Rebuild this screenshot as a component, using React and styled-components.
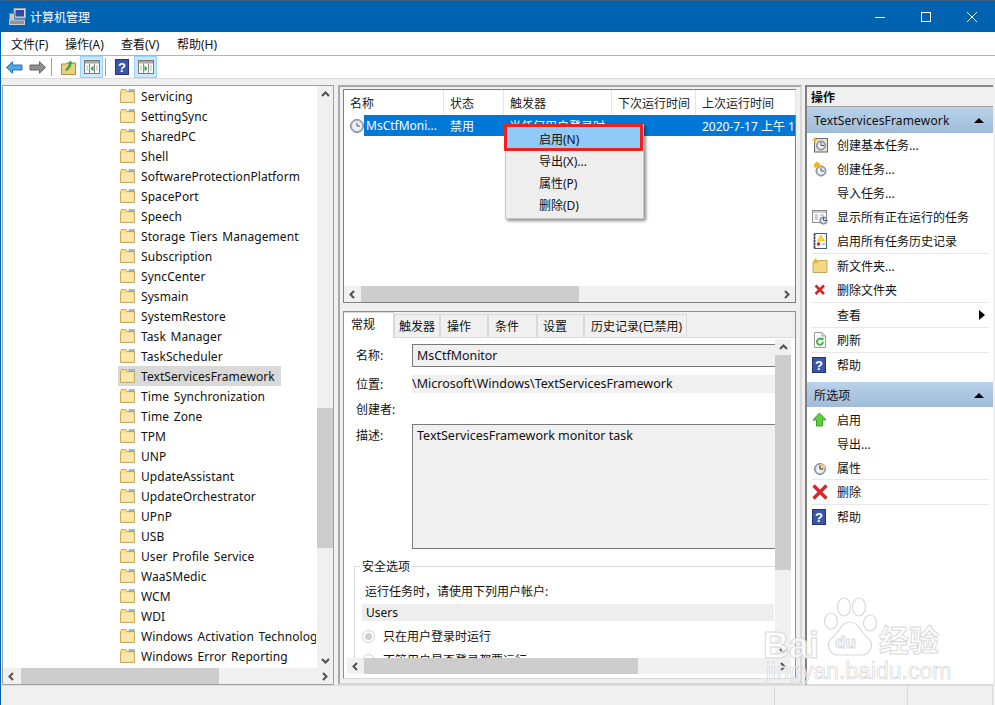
import React from 'react';
import styled, { createGlobalStyle } from 'styled-components';

const Global = createGlobalStyle`
  html, body { margin: 0; padding: 0; background: #f0f0f0; }
  * { box-sizing: border-box; }
  body {
    font-family: "Noto Sans", "Noto Sans CJK SC", sans-serif;
    font-size: 12px;
    color: #111;
  }
`;

const Page = styled.div`
  position: relative;
  width: 995px;
  height: 705px;
  overflow: hidden;
  display: flex;
  flex-direction: column;
  background: #f0f0f0;
  border-left: 1px solid #0063b1;
`;

const TitleBar = styled.div`
  height: 32px;
  flex: none;
  margin-left: -1px;
  display: flex;
  align-items: center;
  padding-left: 9px;
  gap: 4px;
  background: #0063b1;
  border-top: 1px solid #3f5f80;
  color: #fff;
`;

const WindowButtons = styled.div`
  margin-left: auto;
  display: flex;
  align-items: center;
`;

const WindowButton = styled.div`
  width: 46px;
  height: 30px;
  display: flex;
  align-items: center;
  justify-content: center;
`;

const MenuBar = styled.div`
  height: 24px;
  flex: none;
  display: flex;
  padding-left: 10px;
  align-items: center;
  background: #fff;
  border-bottom: 1px solid #b4b4b4;
`;

const MenuItem = styled.span`
  width: ${(p) => p.$width}px;
`;

const ToolBar = styled.div`
  height: 23px;
  flex: none;
  display: flex;
  align-items: center;
  padding-left: 2px;
  background: #fff;
  border-bottom: 1px solid #dcdcdc;
`;

const ToolButton = styled.div`
  width: ${(p) => p.$width || 23}px;
  height: 22px;
  display: flex;
  align-items: center;
  justify-content: center;
  border: 1px solid ${(p) => (p.$on ? '#99d1ff' : 'transparent')};
  background: ${(p) => (p.$on ? '#cce8ff' : 'transparent')};
`;

const ToolSep = styled.div`
  width: 1px;
  height: 18px;
  margin: 0 ${(p) => p.$after}px 0 2px;
  background: #a0a0a0;
`;

const Main = styled.div`
  flex: 1;
  min-height: 0;
  display: flex;
  padding: 6px 1px 0 1px;
`;

const TreePane = styled.div`
  width: 332px;
  flex: none;
  display: flex;
  flex-direction: column;
  border: 1px solid #a0a0a0;
  background: #fff;
`;

const TreeTop = styled.div`
  flex: 1;
  min-height: 0;
  display: flex;
`;

const TreeList = styled.div`
  flex: 1;
  min-width: 0;
  overflow: hidden;
  padding: 0 0 0 115px;
  letter-spacing: 0.07px;
  word-spacing: 1.5px;
`;

const TreeRow = styled.div`
  height: 20px;
  width: ${(p) => (p.$on ? '163px' : '198px')};
  display: flex;
  align-items: center;
  gap: 6px;
  padding-left: 2px;
  white-space: nowrap;
  overflow: ${(p) => (p.$on ? 'visible' : 'hidden')};
  background: ${(p) => (p.$on ? '#d9d9d9' : 'transparent')};
  svg { flex: none; }
`;

const ScrollTrack = styled.div`
  flex: none;
  display: flex;
  flex-direction: ${(p) => (p.$vertical ? 'column' : 'row')};
  align-items: stretch;
  background: #f0f0f0;
  ${(p) => (p.$vertical ? 'width: 16px;' : 'height: 16px;')}
`;

const ScrollEnd = styled.div`
  flex: none;
  width: ${(p) => (p.$vertical ? '16px' : '17px')};
  height: ${(p) => (p.$vertical ? '16px' : 'auto')};
  display: flex;
  align-items: center;
  justify-content: center;
`;

const ScrollRail = styled.div`
  flex: 1;
  min-width: 0;
  min-height: 0;
`;

const ScrollThumb = styled.div`
  background: #cdcdcd;
  ${(p) =>
    p.$vertical
      ? `margin-top:${p.$start}px; height:${p.$size}px;`
      : `margin-left:${p.$start}px; width:${p.$size}px; height:100%;`}
`;

const CenterColumn = styled.div`
  width: 464px;
  flex: none;
  margin-left: 4px;
  display: flex;
  flex-direction: column;
  gap: 8px;
  padding: 2px 4px 4px 3px;
  border: 2px solid #a8a8a8;
  border-bottom-color: #d8d8d8;
  border-right-color: #d8d8d8;
`;

const TaskPane = styled.div`
  height: 214px;
  flex: none;
  display: flex;
  flex-direction: column;
  background: #fff;
  border: 1px solid #7f7f7f;
`;

const HeaderRow = styled.div`
  height: 25px;
  flex: none;
  display: flex;
`;

const HeaderCell = styled.div`
  width: ${(p) => p.$width}px;
  flex: none;
  padding-left: 6px;
  display: flex;
  align-items: center;
  border-right: 1px solid #e5e5e5;
  color: #222;
`;

const TaskRow = styled.div`
  height: 21px;
  flex: none;
  display: flex;
  align-items: center;
  padding-left: 5px;
`;

const TaskCells = styled.div`
  flex: 1;
  height: 21px;
  margin-left: -1px;
  display: flex;
  align-items: center;
  background: #0078d7;
  color: #fff;
  white-space: nowrap;
  overflow: hidden;
`;

const TaskCell = styled.span`
  width: ${(p) => p.$width}px;
  flex: none;
  padding-left: ${(p) => p.$pad}px;
  overflow: hidden;
`;

const TaskSpace = styled.div`
  flex: 1;
`;

const DetailPane = styled.div`
  flex: 1;
  min-height: 0;
  display: flex;
  flex-direction: column;
  background: #fff;
  border: 1px solid #909090;
  border-bottom-color: #d8d8d8;
`;

const TabStrip = styled.div`
  height: 26px;
  flex: none;
  display: flex;
  align-items: flex-end;
  background: #f0f0f0;
  border-bottom: 1px solid #d9d9d9;
`;

const Tab = styled.div`
  width: ${(p) => p.$width}px;
  height: ${(p) => (p.$on ? 26 : 23)}px;
  margin-bottom: ${(p) => (p.$on ? -1 : 0)}px;
  flex: none;
  padding: 0 0 ${(p) => (p.$on ? 3 : 1)}px ${(p) => p.$pad}px;
  display: flex;
  align-items: center;
  background: ${(p) => (p.$on ? '#fff' : '#f0f0f0')};
  border: 1px solid #d9d9d9;
  border-left-width: ${(p) => (p.$on ? 0 : 1)}px;
  border-bottom-width: 0;
  z-index: 1;
`;

const TabBody = styled.div`
  flex: 1;
  min-height: 0;
  display: flex;
  flex-direction: column;
  padding: 1px 4px 4px 3px;
`;

const FormArea = styled.div`
  flex: 1;
  min-height: 0;
  display: flex;
`;

const Form = styled.div`
  flex: 1;
  min-width: 0;
  overflow: hidden;
  padding: 5px 0 0 9px;
`;

const FormRow = styled.div`
  display: flex;
  height: ${(p) => p.$height}px;
  margin-top: ${(p) => p.$top || 0}px;
`;

const FormLabel = styled.div`
  width: 56px;
  flex: none;
  padding-top: ${(p) => p.$pad || 0}px;
  line-height: 18px;
`;

const ReadBox = styled.div`
  flex: 1;
  min-width: 0;
  padding: ${(p) => (p.$pad ? '0 4px' : '0')};
  font-size: ${(p) => p.$size || 12}px;
  line-height: ${(p) => p.$line || 18}px;
  background: #f0f0f0;
  border: ${(p) => (p.$framed ? '1px solid #7a7a7a' : 'none')};
  border-right: none;
  white-space: nowrap;
`;

const Group = styled.div`
  position: relative;
  margin: 17px 0 0 -2px;
  padding: 16px 0 0 7px;
  border-top: 1px solid #dcdcdc;
  border-left: 1px solid #dcdcdc;
`;

const Legend = styled.span`
  position: absolute;
  top: -9px;
  left: 5px;
  padding: 0 2px;
  line-height: 18px;
  background: #fff;
`;

const GroupText = styled.div`
  line-height: 18px;
  padding-left: 3px;
`;

const UserBox = styled.div`
  height: 17px;
  margin: 3px 1px 0 0;
  padding-left: 4px;
  line-height: 17px;
  background: #eeeeee;
`;

const RadioRow = styled.div`
  display: flex;
  align-items: center;
  gap: 8px;
  height: 18px;
  margin-top: 6px;
`;

const Radio = styled.span`
  position: relative;
  width: 13px;
  height: 13px;
  flex: none;
  border: 1px solid #cfcfcf;
  border-radius: 50%;
  background: #fff;
  ${(p) =>
    p.$on &&
    `&::after {
      content: '';
      position: absolute;
      inset: 2px;
      border-radius: 50%;
      background: #cfcfcf;
    }`}
`;

const ActionPane = styled.div`
  width: 188px;
  flex: none;
  margin-left: 3px;
  background: #fff;
  border-left: 2px solid #7f7f7f;
  border-top: 2px solid #8a8a8a;
  border-bottom: 1px solid #d8d8d8;
`;

const ActionTitle = styled.div`
  height: 20px;
  padding-left: 4px;
  display: flex;
  align-items: center;
  font-weight: 700;
  background: #f0f0f0;
  border-bottom: 1px solid #a0a0a0;
`;

const ActionBand = styled.div`
  height: ${(p) => p.$height}px;
  margin-top: ${(p) => p.$top || 0}px;
  padding: 1px 9px 0 7px;
  display: flex;
  align-items: center;
  justify-content: space-between;
  letter-spacing: 0.15px;
  background: linear-gradient(#bad3ec, #9fbbd8);
`;

const Caret = styled.span`
  width: 0;
  height: 0;
  border-left: 5px solid transparent;
  border-right: 5px solid transparent;
  border-bottom: 5px solid #000;
`;

const ActionList = styled.div`
  display: flex;
  flex-direction: column;
  padding: ${(p) => p.$top || 0}px 5px 0;
`;

const ActionRow = styled.div`
  position: relative;
  height: ${(p) => p.$height || 24}px;
  display: flex;
  align-items: center;
  border-bottom: 1px solid ${(p) => (p.$line ? '#e8e8e8' : 'transparent')};
`;

const ActionIcon = styled.span`
  width: 25px;
  height: 18px;
  flex: none;
  display: flex;
  align-items: center;
  justify-content: flex-start;
`;

const RowArrow = styled.span`
  margin-left: auto;
  margin-right: 3px;
  width: 0;
  height: 0;
  border-top: 5px solid transparent;
  border-bottom: 5px solid transparent;
  border-left: 6px solid #000;
`;

const StatusBar = styled.div`
  height: 20px;
  flex: none;
  display: flex;
  background: #f0f0f0;
  border-top: 1px solid #dedede;
`;

const StatusCell = styled.div`
  width: ${(p) => p.$width}px;
  flex: none;
  border-right: 1px solid #d9d9d9;
`;

const ContextMenu = styled.div`
  position: absolute;
  left: 504px;
  top: 124px;
  width: 139px;
  height: 95px;
  padding: 2px 1px;
  background: #eeeeee;
  border: 1px solid #c8c8c8;
  box-shadow: 2px 2px 3px rgba(0, 0, 0, 0.45);
`;

const ContextItem = styled.div`
  height: ${(p) => (p.$on ? 23 : 22)}px;
  padding-left: 32px;
  display: flex;
  align-items: center;
  background: ${(p) => (p.$on ? '#91c9f7' : 'transparent')};
`;

const RedFrame = styled.div`
  position: absolute;
  left: 503px;
  top: 124px;
  width: 139px;
  height: 27px;
  border: 3px solid #f0201c;
  border-radius: 1px;
`;

const Watermark = styled.div`
  position: absolute;
  left: 762px;
  top: 596px;
  width: 182px;
  height: 90px;
  pointer-events: none;
`;

const MarkBrand = styled.span`
  position: absolute;
  left: ${(p) => p.$left}px;
  top: ${(p) => p.$top}px;
  font-family: "Liberation Sans", "Noto Sans CJK SC", sans-serif;
  font-size: ${(p) => p.$size}px;
  font-weight: 700;
  line-height: 1;
  color: rgba(255, 255, 255, 0.75);
  -webkit-text-stroke: 1px #d9d9d9;
  white-space: nowrap;
`;

const MarkLink = styled.span`
  position: absolute;
  left: 3px;
  top: 64px;
  font-family: "Liberation Sans", sans-serif;
  font-size: 23px;
  line-height: 1;
  color: rgba(255, 255, 255, 0.7);
  -webkit-text-stroke: 0.7px #d6d6d6;
  white-space: nowrap;
`;

const MarkPaw = styled.svg`
  position: absolute;
  left: 60px;
  top: 1px;
`;

/* ---- drawings ---- */

const Chevron = ({ dir }) => {
  const d = {
    up: 'M1 6 L4.5 2.5 L8 6',
    down: 'M1 3 L4.5 6.5 L8 3',
    left: 'M6 1 L2.5 4.5 L6 8',
    right: 'M3 1 L6.5 4.5 L3 8',
  }[dir];
  return (
    <svg width="9" height="9" viewBox="0 0 9 9">
      <path d={d} fill="none" stroke="#505050" strokeWidth="2" />
    </svg>
  );
};

const Folder = () => (
  <svg width="15" height="14" viewBox="0 0 15 14">
    <path d="M0.5 2.5 V13.5 H14.5 V2.5 H7 L6 0.5 H1.5 Z" fill="#f9dc8c" stroke="#c9a95e" />
    <path d="M1.5 4 H13.5 V12.5 H1.5 Z" fill="#fbe7ab" />
    <path d="M9 0.5 H14.5 V2.5 H9 Z" fill="#8fb8dc" stroke="#9a9a7a" strokeWidth="0.5" />
  </svg>
);

const ClockGlyph = ({ cx = 8, cy = 8, r = 6.5 }) => (
  <g>
    <circle cx={cx} cy={cy} r={r} fill="#a9b6c2" stroke="#7c8792" />
    <circle cx={cx} cy={cy} r={r - 1.6} fill="#eef1f3" />
    <path d={`M${cx} ${cy - 3.2} V${cy} H${cx + 3}`} fill="none" stroke="#4a5560" strokeWidth="1" />
  </g>
);

const ClockIcon = () => (
  <svg width="16" height="16" viewBox="0 0 16 16">
    <ClockGlyph />
  </svg>
);

const NewTaskIcon = () => (
  <svg width="16" height="16" viewBox="0 0 16 16">
    <rect x="2.5" y="1.5" width="13" height="13.5" fill="#e8e2d8" stroke="#6f6660" />
    <ClockGlyph cx={9} cy={8.5} r={4.5} />
    <path d="M3 0 L4 2 L6 3 L4 4 L3 6 L2 4 L0 3 L2 2 Z" fill="#f6b21a" />
  </svg>
);

const TaskIcon = () => (
  <svg width="16" height="16" viewBox="0 0 16 16">
    <ClockGlyph cx={9} cy={10} r={5} />
    <path d="M2 3 L5 0.5 L8 3 L9.5 7 L5 6 L2 7 Z" fill="#f4b81f" />
  </svg>
);

const PropertyIcon = () => (
  <svg width="16" height="16" viewBox="0 0 16 16">
    <ClockGlyph cx={8} cy={9} r={5.5} />
    <path d="M8 3.5 A5.5 5.5 0 0 1 13.5 9 H8 Z" fill="#eec98a" />
    <path d="M8 5.5 V9 H11" fill="none" stroke="#4a5560" />
  </svg>
);

const RunningIcon = () => (
  <svg width="16" height="16" viewBox="0 0 16 16">
    <rect x="0.5" y="1.5" width="14" height="12" fill="#fff" stroke="#8b8b8b" />
    <rect x="1" y="2" width="13" height="2" fill="#c5cbd2" />
    <path d="M2.5 6 H6 M2.5 8 H6 M2.5 10 H6 M8 6 H12" stroke="#9ba3ab" />
    <ClockGlyph cx={11.5} cy={11.5} r={3.7} />
  </svg>
);

const HistoryIcon = () => (
  <svg width="16" height="16" viewBox="0 0 16 16">
    <rect x="2.5" y="0.5" width="12" height="15" fill="#f7f7f5" stroke="#4d5b78" />
    <path d="M1 2 H4 M1 5 H4 M1 8 H4 M1 11 H4 M1 14 H4" stroke="#555" />
    <path d="M9 2 L12.5 8 H5.5 Z" fill="#f7d93a" stroke="#c7a420" strokeWidth="0.5" />
    <circle cx="6.5" cy="11" r="1.7" fill="#c8282e" />
    <path d="M9.5 11 H13" stroke="#999" />
  </svg>
);

const FolderNewIcon = () => (
  <svg width="16" height="16" viewBox="0 0 16 16">
    <path d="M1 4 H6 L7 2.5 H15 V14.5 H1 Z" fill="#f6d784" stroke="#c5a85f" />
    <path d="M2.5 2 L3.7 0.2 L5 2 L7 3 L5 4 L3.7 6 L2.5 4 L0.5 3 Z" fill="#f5ae17" />
  </svg>
);

const DeleteSmallIcon = () => (
  <svg width="16" height="16" viewBox="0 0 16 16">
    <path d="M3.5 3.5 L12 12 M12 3.5 L3.5 12" stroke="#d1242b" strokeWidth="2.6" />
  </svg>
);

const DeleteBigIcon = () => (
  <svg width="16" height="16" viewBox="0 0 16 16">
    <path d="M1.5 1.5 L14.5 14.5 M14.5 1.5 L1.5 14.5" stroke="#d9282d" strokeWidth="3.4" />
  </svg>
);

const RefreshIcon = () => (
  <svg width="16" height="16" viewBox="0 0 16 16">
    <path d="M2.5 0.5 H10 L13.5 4 V15.5 H2.5 Z" fill="#fbfbfb" stroke="#9c9c9c" />
    <path d="M10 0.5 V4 H13.5" fill="#e2e2e2" stroke="#9c9c9c" />
    <path d="M11 10 A3 3 0 1 1 10 7.5" fill="none" stroke="#3fb54a" strokeWidth="2" />
    <path d="M8.5 5.5 L12 6 L10.5 9 Z" fill="#3fb54a" />
  </svg>
);

const HelpIcon = () => (
  <svg width="14" height="16" viewBox="0 0 14 16">
    <rect x="0.5" y="0.5" width="13" height="15" fill="#3b56a8" stroke="#25356f" />
    <text x="7" y="13" textAnchor="middle" fontFamily="Liberation Sans, sans-serif" fontSize="13" fontWeight="700" fill="#fff">?</text>
  </svg>
);

const EnableIcon = () => (
  <svg width="15" height="15" viewBox="0 0 15 15">
    <path d="M7.5 1 L14 8 H10.5 V14 H4.5 V8 H1 Z" fill="#5ed03c" stroke="#3b9f2a" />
  </svg>
);

const BackIcon = () => (
  <svg width="17" height="13" viewBox="0 0 17 13">
    <path d="M0.5 6.5 L6.5 0.8 V4 H16 V9 H6.5 V12.2 Z" fill="#4ea6e8" stroke="#2a6fb2" />
  </svg>
);

const ForwardIcon = () => (
  <svg width="17" height="13" viewBox="0 0 17 13">
    <path d="M16.5 6.5 L10.5 0.8 V4 H1 V9 H10.5 V12.2 Z" fill="#8f8f8f" stroke="#666" />
  </svg>
);

const UpFolderIcon = () => (
  <svg width="15" height="15" viewBox="0 0 15 15">
    <path d="M0.5 4 H5 L6 3 H14.5 V14.5 H0.5 Z" fill="#eccf80" stroke="#a98f4d" />
    <path d="M4 10 C6 8 7 6 8 4 L6.5 4 L9.5 0.5 L12 4 L10.5 4 C10 7 8 10 5 11 Z" fill="#35a853" />
  </svg>
);

const PaneIcon = ({ side }) => (
  <svg width="16" height="14" viewBox="0 0 16 14">
    <rect x="0.5" y="0.5" width="15" height="13" fill="#fff" stroke="#777" />
    <rect x="1" y="1" width="14" height="2.5" fill="#a8a8a8" />
    <path d="M5.5 3.5 V13.5 M10.5 3.5 V13.5" stroke="#888" />
    <path d="M2 6 H4 M2 8 H4 M2 10 H4 M12 6 H14 M12 8 H14 M12 10 H14" stroke="#b5b5b5" />
    {side === 'left' ? (
      <path d="M9.5 5.5 L6.5 8.5 L9.5 11.5 Z" fill="#2aa34a" />
    ) : (
      <path d="M6.5 5.5 L9.5 8.5 L6.5 11.5 Z" fill="#2aa34a" />
    )}
  </svg>
);

const AppIcon = () => (
  <svg width="17" height="17" viewBox="0 0 17 17">
    <rect x="5" y="0.5" width="11.5" height="9.5" fill="#d8dce6" stroke="#9aa4b4" />
    <rect x="6.5" y="2" width="8.5" height="6.5" fill="#2f4aa8" />
    <rect x="0.5" y="5.5" width="5" height="7" fill="#c6cad2" stroke="#7f8793" />
    <rect x="0.5" y="12" width="15" height="4.5" fill="#8d949e" stroke="#c9ccd2" />
  </svg>
);

const Bar = ({ vertical, start, size }) => (
  <ScrollTrack $vertical={vertical}>
    <ScrollEnd $vertical={vertical}>
      <Chevron dir={vertical ? 'up' : 'left'} />
    </ScrollEnd>
    <ScrollRail>
      <ScrollThumb $vertical={vertical} $start={start} $size={size} />
    </ScrollRail>
    <ScrollEnd $vertical={vertical}>
      <Chevron dir={vertical ? 'down' : 'right'} />
    </ScrollEnd>
  </ScrollTrack>
);

const treeItems = [
  'Servicing', 'SettingSync', 'SharedPC', 'Shell', 'SoftwareProtectionPlatform',
  'SpacePort', 'Speech', 'Storage Tiers Management', 'Subscription', 'SyncCenter',
  'Sysmain', 'SystemRestore', 'Task Manager', 'TaskScheduler', 'TextServicesFramework',
  'Time Synchronization', 'Time Zone', 'TPM', 'UNP', 'UpdateAssistant',
  'UpdateOrchestrator', 'UPnP', 'USB', 'User Profile Service', 'WaaSMedic',
  'WCM', 'WDI', 'Windows Activation Technologies', 'Windows Error Reporting',
];

const columns = [
  { label: '名称', width: 100 },
  { label: '状态', width: 60 },
  { label: '触发器', width: 108 },
  { label: '下次运行时间', width: 84 },
  { label: '上次运行时间', width: 100 },
];

const tabs = [
  { label: '常规', width: 50, pad: 7, on: true },
  { label: '触发器', width: 46, pad: 4 },
  { label: '操作', width: 48, pad: 6 },
  { label: '条件', width: 49, pad: 6 },
  { label: '设置', width: 47, pad: 5 },
  { label: '历史记录(已禁用)', width: 103, pad: 6 },
];

const topActions = [
  { label: '创建基本任务...', icon: <NewTaskIcon /> },
  { label: '创建任务...', icon: <TaskIcon /> },
  { label: '导入任务...' },
  { label: '显示所有正在运行的任务', icon: <RunningIcon /> },
  { label: '启用所有任务历史记录', icon: <HistoryIcon />, line: true, height: 25 },
  { label: '新文件夹...', icon: <FolderNewIcon /> },
  { label: '删除文件夹', icon: <DeleteSmallIcon />, line: true, height: 25 },
  { label: '查看', arrow: true, line: true, height: 25 },
  { label: '刷新', icon: <RefreshIcon />, line: true, height: 25 },
  { label: '帮助', icon: <HelpIcon />, height: 25 },
];

const selectedActions = [
  { label: '启用', icon: <EnableIcon /> },
  { label: '导出...' },
  { label: '属性', icon: <PropertyIcon />, line: true },
  { label: '删除', icon: <DeleteBigIcon />, line: true, height: 25 },
  { label: '帮助', icon: <HelpIcon />, height: 25 },
];

const ActionItems = ({ items, top }) => (
  <ActionList $top={top}>
    {items.map((item) => (
      <ActionRow key={item.label} $height={item.height} $line={item.line}>
        <ActionIcon>{item.icon}</ActionIcon>
        <span>{item.label}</span>
        {item.arrow && <RowArrow />}
      </ActionRow>
    ))}
  </ActionList>
);

const App = () => {
  return (
    <Page>
      <Global />
      <TitleBar>
        <AppIcon />
        <span>计算机管理</span>
        <WindowButtons>
          <WindowButton>
            <svg width="10" height="10" viewBox="0 0 10 10"><path d="M0 5.5 H10" stroke="#fff" /></svg>
          </WindowButton>
          <WindowButton>
            <svg width="10" height="10" viewBox="0 0 10 10"><rect x="0.5" y="0.5" width="9" height="9" fill="none" stroke="#fff" /></svg>
          </WindowButton>
          <WindowButton>
            <svg width="10" height="10" viewBox="0 0 10 10"><path d="M0 0 L10 10 M10 0 L0 10" stroke="#fff" /></svg>
          </WindowButton>
        </WindowButtons>
      </TitleBar>

      <MenuBar>
        <MenuItem $width={54}>文件(F)</MenuItem>
        <MenuItem $width={56}>操作(A)</MenuItem>
        <MenuItem $width={56}>查看(V)</MenuItem>
        <MenuItem $width={56}>帮助(H)</MenuItem>
      </MenuBar>

      <ToolBar>
        <ToolButton><BackIcon /></ToolButton>
        <ToolButton><ForwardIcon /></ToolButton>
        <ToolSep $after={5} />
        <ToolButton><UpFolderIcon /></ToolButton>
        <ToolButton $on><PaneIcon side="left" /></ToolButton>
        <ToolSep $after={3} />
        <ToolButton $width={25}><HelpIcon /></ToolButton>
        <ToolButton $on><PaneIcon side="right" /></ToolButton>
      </ToolBar>

      <Main>
        <TreePane>
          <TreeTop>
            <TreeList>
              {treeItems.map((name) => (
                <TreeRow key={name} $on={name === 'TextServicesFramework'}>
                  <Folder />
                  <span>{name}</span>
                </TreeRow>
              ))}
            </TreeList>
            <Bar vertical start={306} size={140} />
          </TreeTop>
          <Bar start={1} size={198} />
        </TreePane>

        <CenterColumn>
          <TaskPane>
            <HeaderRow>
              {columns.map((col) => (
                <HeaderCell key={col.label} $width={col.width}>{col.label}</HeaderCell>
              ))}
            </HeaderRow>
            <TaskRow>
              <ClockIcon />
              <TaskCells>
                <TaskCell $width={79} $pad={2}>MsCtfMoni...</TaskCell>
                <TaskCell $width={60} $pad={7}>禁用</TaskCell>
                <TaskCell $width={192} $pad={6}>当任何用户登录时</TaskCell>
                <TaskCell $width={100} $pad={7}>2020-7-17 上午 11</TaskCell>
              </TaskCells>
            </TaskRow>
            <TaskSpace />
            <Bar start={0} size={218} />
          </TaskPane>

          <DetailPane>
            <TabStrip>
              {tabs.map((tab) => (
                <Tab key={tab.label} $width={tab.width} $pad={tab.pad} $on={tab.on}>{tab.label}</Tab>
              ))}
            </TabStrip>
            <TabBody>
              <FormArea>
                <Form>
                  <FormRow $height={23}>
                    <FormLabel $pad={3}>名称:</FormLabel>
                    <ReadBox $framed $pad $line={21} $size={12.4}>MsCtfMonitor</ReadBox>
                  </FormRow>
                  <FormRow $height={18} $top={8}>
                    <FormLabel $pad={1}>位置:</FormLabel>
                    <ReadBox $size={12.5}>\Microsoft\Windows\TextServicesFramework</ReadBox>
                  </FormRow>
                  <FormRow $height={18} $top={8}>
                    <FormLabel>创建者:</FormLabel>
                  </FormRow>
                  <FormRow $height={125} $top={5}>
                    <FormLabel $pad={3}>描述:</FormLabel>
                    <ReadBox $framed $pad $line={21} $size={12.5}>TextServicesFramework monitor task</ReadBox>
                  </FormRow>
                  <Group>
                    <Legend>安全选项</Legend>
                    <GroupText>运行任务时，请使用下列用户帐户:</GroupText>
                    <UserBox>Users</UserBox>
                    <RadioRow>
                      <Radio $on />
                      <span>只在用户登录时运行</span>
                    </RadioRow>
                    <RadioRow>
                      <Radio />
                      <span>不管用户是否登录都要运行</span>
                    </RadioRow>
                  </Group>
                </Form>
                <Bar vertical start={0} size={215} />
              </FormArea>
              <Bar start={0} size={274} />
            </TabBody>
          </DetailPane>
        </CenterColumn>

        <ActionPane>
          <ActionTitle>操作</ActionTitle>
          <ActionBand $height={26}>
            <span>TextServicesFramework</span>
            <Caret />
          </ActionBand>
          <ActionItems items={topActions} />
          <ActionBand $height={25} $top={4}>
            <span>所选项</span>
            <Caret />
          </ActionBand>
          <ActionItems items={selectedActions} top={1} />
        </ActionPane>
      </Main>

      <StatusBar>
        <StatusCell $width={774} />
        <StatusCell $width={133} />
        <StatusCell $width={85} />
      </StatusBar>

      <ContextMenu>
        <ContextItem $on>启用(N)</ContextItem>
        <ContextItem>导出(X)...</ContextItem>
        <ContextItem>属性(P)</ContextItem>
        <ContextItem>删除(D)</ContextItem>
      </ContextMenu>
      <RedFrame />

      <Watermark>
        <MarkBrand $left={0} $top={32} $size={36}>Bai</MarkBrand>
        <MarkPaw width="54" height="60" viewBox="0 0 54 60">
          <g fill="rgba(255,255,255,0.75)" stroke="#d9d9d9" strokeWidth="1.2">
            <ellipse cx="8" cy="24" rx="6.5" ry="8" />
            <ellipse cx="21" cy="10" rx="6.5" ry="9" />
            <ellipse cx="36" cy="10" rx="6.5" ry="9" />
            <ellipse cx="47" cy="26" rx="6.5" ry="8" />
            <path d="M27 25 C18 25 16 36 9 41 C2 47 6 58 16 58 H38 C48 58 52 47 45 41 C38 36 36 25 27 25 Z" />
          </g>
        </MarkPaw>
        <MarkBrand $left={72} $top={38} $size={17}>du</MarkBrand>
        <MarkBrand $left={116} $top={30} $size={30}>经验</MarkBrand>
        <MarkLink>jingyan.baidu.com</MarkLink>
      </Watermark>
    </Page>
  );
};

export default App;
